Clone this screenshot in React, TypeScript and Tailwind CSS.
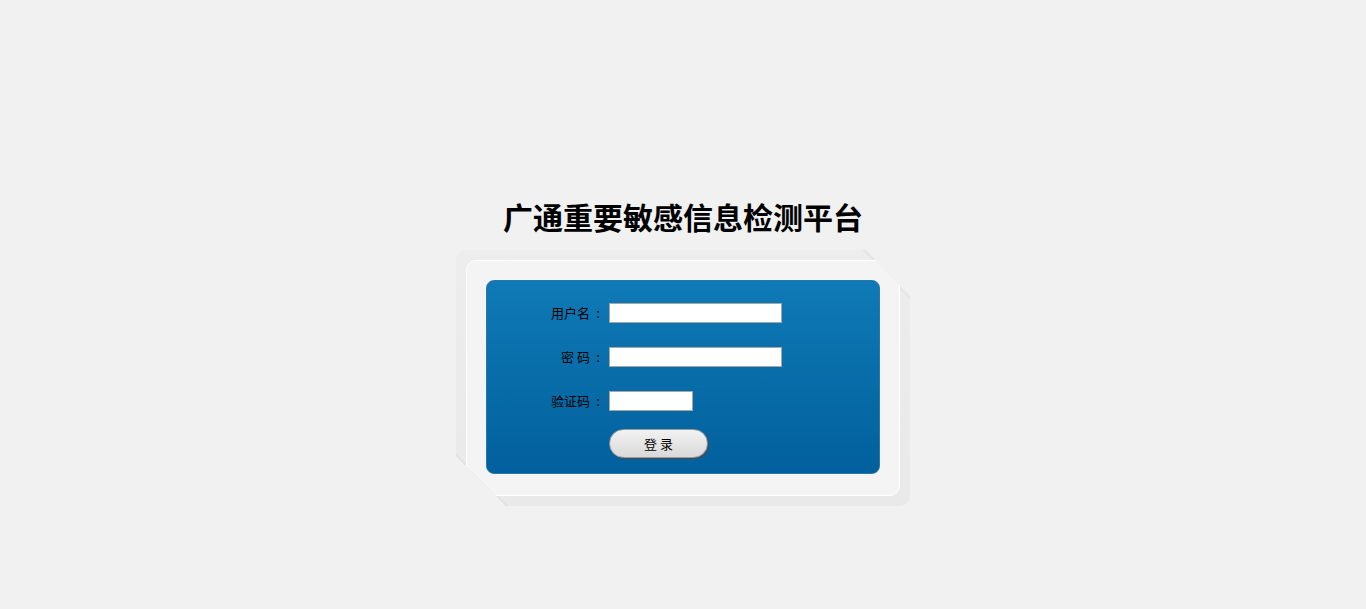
function Label({ text }: { text: string }) {
  return (
    <span className="flex w-[119px] justify-end text-[13px] leading-[20px] text-black">
      <span>{text}</span>
      <span className="w-[16px] text-center">:</span>
    </span>
  );
}

export default function App() {
  return (
    <div className="flex min-h-screen flex-col items-center bg-[#f1f1f1] pt-[198px] font-['Noto_Sans_CJK_SC',sans-serif]">
      <h1 className="text-[30px] font-bold leading-[36px] text-black">广通重要敏感信息检测平台</h1>

      {/* Frame */}
      <div className="relative mt-[16px] h-[256px] w-[454px] rounded-[10px] bg-gradient-to-b from-[#ededed] to-[#e9e9e9] p-[10px] [clip-path:polygon(0_0,410px_0,454px_46px,454px_100%,50px_100%,0_206px)]">
        {/* fold shading */}
        <div className="absolute right-0 top-0 h-[50px] w-[48px] bg-gradient-to-bl from-transparent via-[#dedede] to-transparent opacity-50 [clip-path:polygon(0_0,100%_100%,100%_90%,10%_0)]" />
        <div className="absolute bottom-0 left-0 h-[52px] w-[52px] bg-gradient-to-tr from-transparent via-[#d6d6d6] to-transparent opacity-50 [clip-path:polygon(0_0,100%_100%,90%_100%,0_10%)]" />

        <div className="relative h-full rounded-[10px] border border-white bg-[#f4f4f4] p-[19px]">
          <div className="h-[194px] rounded-[8px] border border-[#2778ad] bg-gradient-to-b from-[#0f7ab6] to-[#02609d] pt-[22px]">
            <div className="flex flex-col gap-[24px]">
              <div className="flex items-center">
                <Label text="用户名" />
                <input className="ml-[3px] h-[20px] w-[173px] border border-[#a6a6a6] bg-white outline-none" />
              </div>
              <div className="flex items-center">
                <Label text="密 码" />
                <input type="password" className="ml-[3px] h-[20px] w-[173px] border border-[#a6a6a6] bg-white outline-none" />
              </div>
              <div className="flex items-center">
                <Label text="验证码" />
                <input className="ml-[3px] h-[20px] w-[84px] border border-[#a6a6a6] bg-white outline-none" />
              </div>
            </div>
            <div className="mt-[18px] pl-[122px]">
              <button className="h-[29px] w-[99px] rounded-full border border-[#9a9a9a] bg-gradient-to-b from-[#f2f2f2] to-[#d9d9d9] text-[13px] text-black shadow-[1px_1px_1px_#4a4a4a]">
                登 录
              </button>
            </div>
          </div>
        </div>
      </div>
    </div>
  );
}
